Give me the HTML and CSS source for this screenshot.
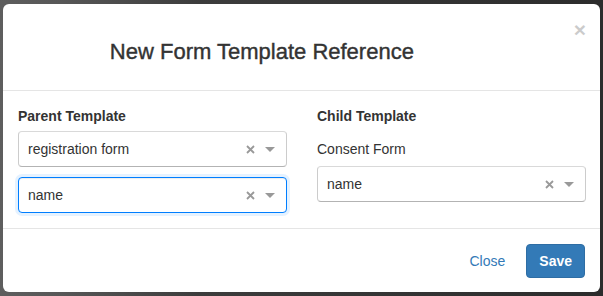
FILE: index.html
```html
<!DOCTYPE html>
<html lang="en">
<head>
    <meta charset="UTF-8">
    <meta name="viewport" content="width=device-width, initial-scale=1.0">
    <title>New Form Template Reference</title>
    <link rel="stylesheet" href="styles.css">
</head>
<body>
    <div class="modal">
        <div class="modal-header">
            <h4 class="modal-title">New Form Template Reference</h4>
            <button class="close" type="button">×</button>
        </div>
        <div class="modal-body">
            <div class="row">
                <div class="col">
                    <label class="field-label">Parent Template</label>
                    <div class="select">
                        <span class="select-value">registration form</span>
                        <svg class="select-clear" viewBox="0 0 9 9"><path d="M1 1L8 8M8 1L1 8"/></svg>
                        <svg class="select-arrow" viewBox="0 0 10 5"><path d="M0 0H10L5 5Z"/></svg>
                    </div>
                    <div class="select is-focused">
                        <span class="select-value">name</span>
                        <svg class="select-clear" viewBox="0 0 9 9"><path d="M1 1L8 8M8 1L1 8"/></svg>
                        <svg class="select-arrow" viewBox="0 0 10 5"><path d="M0 0H10L5 5Z"/></svg>
                    </div>
                </div>
                <div class="col">
                    <label class="field-label">Child Template</label>
                    <p class="form-name">Consent Form</p>
                    <div class="select">
                        <span class="select-value">name</span>
                        <svg class="select-clear" viewBox="0 0 9 9"><path d="M1 1L8 8M8 1L1 8"/></svg>
                        <svg class="select-arrow" viewBox="0 0 10 5"><path d="M0 0H10L5 5Z"/></svg>
                    </div>
                </div>
            </div>
        </div>
        <div class="modal-footer">
            <button class="btn btn-link" type="button">Close</button>
            <button class="btn btn-primary" type="button">Save</button>
        </div>
    </div>
</body>
</html>
```

FILE: styles.css
```css
* {
    box-sizing: border-box;
}

body {
    margin: 0;
    padding: 4px 3px 0;
    height: 296px;
    overflow: hidden;
    background: linear-gradient(to right, #5e5e5e 0, #575757 60px, #3c3c3c 200px, #2c2c2c 100%);
    font-family: "Liberation Sans", Arial, sans-serif;
    font-size: 14px;
    color: #333;
}

.modal {
    background: #fff;
    border-radius: 6px;
}

.modal-header {
    display: flex;
    align-items: flex-start;
    height: 87px;
    padding: 15px 14px 0 15px;
    border-bottom: 1px solid #e5e5e5;
}

.modal-title {
    flex: 1;
    margin: 20px 68px 0 0;
    font-size: 22px;
    line-height: 26px;
    font-weight: normal;
    text-align: center;
    color: #333;
    -webkit-text-stroke: 0.4px #333;
}

.close {
    background: none;
    border: 0;
    padding: 0;
    font-family: "Liberation Sans", Arial, sans-serif;
    font-size: 21px;
    font-weight: bold;
    line-height: 1;
    color: #000;
    opacity: 0.2;
    cursor: pointer;
}

.modal-body {
    padding: 15px 14px 15px 15px;
}

.row {
    display: grid;
    grid-template-columns: 1fr 1fr;
    gap: 30px;
}

.field-label {
    display: block;
    font-weight: bold;
    line-height: 20px;
    margin-bottom: 5px;
}

/* label margin collapses into this one */
.form-name {
    margin: 13px 0 7px;
    line-height: 20px;
}

.select {
    display: flex;
    align-items: center;
    height: 36px;
    padding-left: 9px;
    border: 1px solid #ccc;
    border-color: #d9d9d9 #ccc #b3b3b3;
    border-radius: 4px;
    background: #fff;
}

.select + .select {
    margin-top: 10px;
}

.select.is-focused {
    border-color: #007eff;
    box-shadow: inset 0 1px 1px rgba(0, 0, 0, 0.075), 0 0 0 3px rgba(0, 126, 255, 0.1);
}

.select-value {
    flex: 1;
    color: #333;
}

.select-clear {
    width: 9px;
    height: 9px;
    margin-right: 10px;
    stroke: #999;
    stroke-width: 1.8;
}

.select-arrow {
    width: 10px;
    height: 5px;
    margin-right: 11px;
    fill: #999;
}

.modal-footer {
    display: flex;
    justify-content: flex-end;
    padding: 15px 15px 14px;
    border-top: 1px solid #e5e5e5;
}

.btn {
    padding: 6px 12px;
    font-family: "Liberation Sans", Arial, sans-serif;
    font-size: 14px;
    line-height: 20px;
    border: 1px solid transparent;
    border-radius: 4px;
    cursor: pointer;
}

.btn-link {
    background: none;
    color: #337ab7;
}

.btn-primary {
    margin-left: 8px;
    background-color: #337ab7;
    border-color: #2e6da4;
    color: #fff;
    font-weight: bold;
}
```
